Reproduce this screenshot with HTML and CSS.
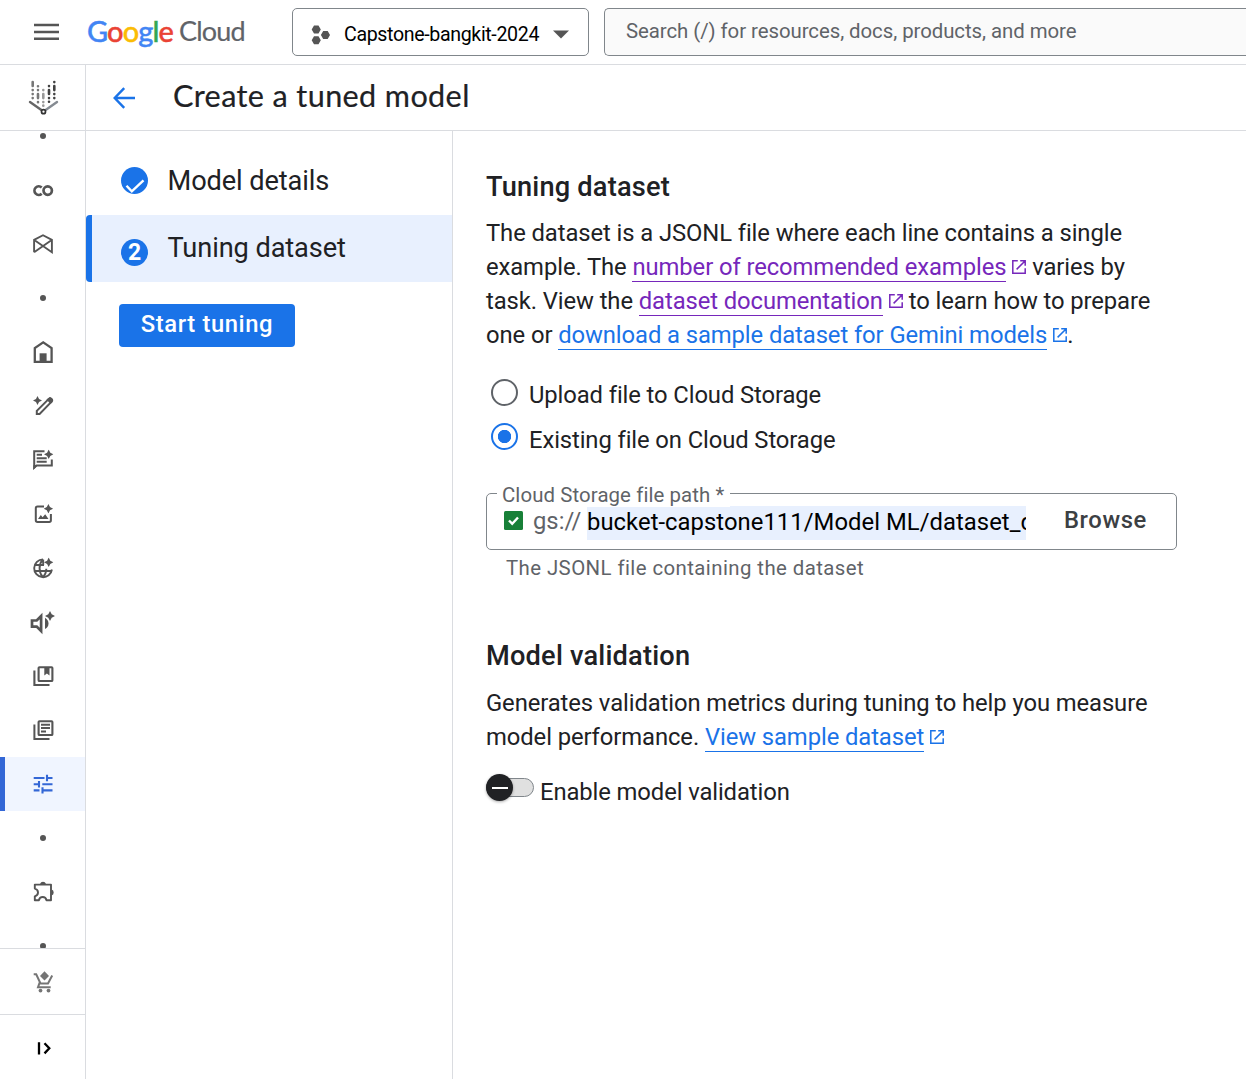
FILE: index.html
```html
<!DOCTYPE html>
<html lang="en">
<head>
<meta charset="utf-8">
<title>Create a tuned model</title>
<link rel="stylesheet" href="styles.css">
</head>
<body>
<svg class="defs" width="0" height="0" aria-hidden="true">
  <symbol id="spark" viewBox="-5 -5 10 10"><path d="M0-5 1.700-1.700 5 0 1.700 1.700 0 5-1.700 1.700-5 0-1.700-1.700z"/></symbol>
  <symbol id="ext" viewBox="0 0 14 14"><path d="M5.8.8H.8v12.4h12.4V8.2M8.2.8h5v5M13 1 4.6 9.4" fill="none" stroke="currentColor" stroke-width="1.5"/></symbol>
</svg>
<header class="topbar">
  <svg class="menu" width="26" height="18" viewBox="0 0 26 18"><path d="M0 2h25M0 9h25M0 15.700h25" stroke="#555" stroke-width="2.600"/></svg>
  <div class="brand"><span class="google"><i class="b">G</i><i class="r">o</i><i class="y">o</i><i class="b">g</i><i class="g">l</i><i class="r">e</i></span><span class="cloud">Cloud</span></div>
  <button class="project">
    <svg width="20" height="20" viewBox="0 0 20 20" fill="#555"><path d="M3 .5h4.500l2.300 4-2.300 4H3l-2.300-4zM3 11.300h4.500l2.300 4-2.300 4H3l-2.300-4zM12.200 5.900h4.500l2.300 4-2.300 4h-4.500l-2.300-4z"/></svg>
    <span>Capstone-bangkit-2024</span>
    <svg class="caret" width="16" height="9" viewBox="0 0 16 9"><path d="M0 .5h16L8 8.500z" fill="#555"/></svg>
  </button>
  <div class="search"><span>Search (/) for resources, docs, products, and more</span></div>
</header>
<div class="app">
  <nav class="rail">
    <div class="product">
      <svg width="34" height="38" viewBox="26 79 34 38" fill="none" stroke-linecap="round">
        <g stroke-width="2.600">
          <path stroke="#777" d="M32.700 82v4m0 4v.1m0 3.900v.1m0 3.900v.1M38 86.200v.1m0 3.700v.1m0 4v4m0 4v.1"/>
          <path stroke="#999" d="M43.300 90v.1m0 4v4m0 3.900v.1m0 3.500v.1"/>
          <path stroke="#424242" d="M49 86v.1m0 3.900v4m0 4v.1m0 3.600v.1M54.300 82v.1m0 4v4m0 3.900v.1m0 3.900v.1"/>
        </g>
        <path d="M30 102l13.500 9.500" stroke="#666" stroke-width="2.400"/><path d="M43.500 111.500 57 102" stroke="#858b92" stroke-width="2.400"/>
        <circle cx="43.500" cy="111.700" r="2" fill="#fff" stroke="#333" stroke-width="1.700"/>
      </svg>
    </div>
    <div class="rail-list">
      <div class="item"><i class="dot"></i></div>
      <div class="item"><svg viewBox="-17 -17 34 34"><path d="M-1.300-2.500A4.300 4.300 0 1 0-1.300 3.800" stroke-width="2.700"/><circle cx="4.700" cy=".6" r="4.200" stroke-width="2.700"/></svg></div>
      <div class="item"><svg viewBox="-17 -17 34 34"><path d="M-8.900 8.200V-4.200L0-8.800l8.900 4.600V8.200L-8.700-4M-8.900 8.200 8.700-4" stroke-width="1.900"/></svg></div>
      <div class="item"><i class="dot"></i></div>
      <div class="item"><svg viewBox="-17 -17 34 34"><path d="M-8.200 9.800V-4L.2-9.700 8.600-4V9.800z" stroke-width="2.300"/><path class="f" d="M-3.400 1.300h7v9h-7z"/></svg></div>
      <div class="item"><svg viewBox="-17 -17 34 34"><use class="f" href="#spark" x="-10" y="-10" width="9" height="9"/><path d="M-6.200 8V4.900L5.800-7.100Q7.200-8.300 8.500-7t.1 2.600L-3.400 8z" stroke-width="2"/><path class="f" d="M3.500-6.500 7-9 10-6.500 9-3 7-2.500z"/></svg></div>
      <div class="item"><svg viewBox="-17 -17 34 34"><path d="M1.500-8.800H-8.800V7.700L-6.500 5.500H8.800V-.5M-6.300-5.200h5.300M-6.300-1.700h10M-6.300 1.800h10" stroke-width="2"/><path class="f" d="M-9.700 9.700v-4.500h4.500z"/><use class="f" href="#spark" x="1" y="-10.400" width="9.400" height="9.400"/></svg></div>
      <div class="item"><svg viewBox="-17 -17 34 34"><path d="M1-7.500H-5.500Q-7.200-7.500-7.200-5.800V6.200Q-7.200 7.900-5.500 7.900H6.200Q7.900 7.900 7.900 6.200V0" stroke-width="2"/><path class="f" d="M-5 5-2.200 1-.4 3.300 2.200.3 5.500 5z"/><use class="f" href="#spark" x=".7" y="-10" width="9.400" height="9.400"/></svg></div>
      <div class="item"><svg viewBox="-17 -17 34 34"><path d="M0-8.600A8.900 8.900 0 1 0 8.900 1.500M-7.900-3H1M-8.900 3H8.700M-.2-8.600C-4.500-3.500-4.500 4-.2 9.200M-.2 9.200C2.600 6.500 3.300 3.500 3.300.8M.2-8.600V-3" stroke-width="1.900"/><use class="f" href="#spark" x="1" y="-10.400" width="9.400" height="9.400"/></svg></div>
      <div class="item"><svg viewBox="-17 -17 34 34"><path d="M-11-1.500H-6.300L-1.900-6V9L-6.300 4.600H-11z" stroke-width="2.700"/><path class="f" d="M2-4.200Q5.500-2 5.500 1.500T2 7z"/><use class="f" href="#spark" x="2" y="-11" width="10" height="10"/></svg></div>
      <div class="item"><svg viewBox="-17 -17 34 34"><rect x="-4.400" y="-8.800" width="13.800" height="13.800" rx=".8" stroke-width="2.100"/><path d="M-8.600-5.500V9H6.500" stroke-width="2.100"/><path class="f" d="M1.300-8.500h5.200v8L3.900-2.400 1.300-.5z"/></svg></div>
      <div class="item"><svg viewBox="-17 -17 34 34"><rect x="-4.400" y="-8.800" width="13.800" height="13.800" rx=".8" stroke-width="2.100"/><path d="M-8.600-5.500V9H6.500M-2-5.300H7M-2-2H7M-2 1.400H3" stroke-width="2"/></svg></div>
      <div class="item active"><svg viewBox="-17 -17 34 34"><path d="M-9.300-6H1.500M4-9.200V-2.800M4-6H9.500M-9.300.3H-4M-4-2.900V3.400M-.7.3H9.500M-9.300 6.400H-3.500M-.5 3.200V9.500M-.5 6.400H9.500" stroke-width="2.100"/></svg></div>
      <div class="item"><i class="dot"></i></div>
      <div class="item"><svg viewBox="-17 -17 34 34"><path d="M-8.200-7.400H8V8.200H3.500Q2.800 5-.3 5T-4.100 8.200H-8.200V4.300Q-5 3.500-5 .5T-8.200-3.400z" stroke-width="1.900" stroke-linejoin="round"/><path class="f" d="M-3-8Q-2.200-10.300 0-10.300T3-8zM8.500-2.500Q10.700-1.800 10.700.5T8.500 3.500z"/></svg></div>
      <div class="item"><i class="dot"></i></div>
    </div>
    <div class="rail-cart"><svg viewBox="-17 -17 34 34"><path d="M-9.300-7.700H-6.800L-2.500 1.500H5L9.200-6.500M-3-.5-5 5.300H7.700" stroke-width="2"/><path class="f" d="M1.500-10.700 6-6 1.500-1.500-3-6z"/><circle class="f" cx="-2.500" cy="8.600" r="1.900"/><circle class="f" cx="5.500" cy="8.600" r="1.900"/></svg></div>
    <div class="rail-toggle"><svg viewBox="-17 -17 34 34"><path d="M-4-5.800V6.400M1.500-4.800 6.300.3 1.500 5.400" stroke-width="2.300"/></svg></div>
  </nav>
  <div class="page">
    <div class="titlebar">
      <svg width="22" height="22" viewBox="0 0 22 22"><path d="M22 11H2M11.200 1.200 1.700 11l9.500 9.800" fill="none" stroke="#1a73e8" stroke-width="2.400"/></svg>
      <h1>Create a tuned model</h1>
    </div>
    <div class="columns">
      <aside class="steps">
        <div class="step done"><svg width="27" height="27" viewBox="0 0 27 27"><circle cx="13.500" cy="13.500" r="13.500" fill="#1a73e8"/><path d="M5.500 18.700l5.300 5.600L22.500 13.300" fill="none" stroke="#fff" stroke-width="2.400"/></svg><span>Model details</span></div>
        <div class="step current"><b>2</b><span>Tuning dataset</span></div>
        <button class="start"><span>Start tuning</span></button>
      </aside>
      <main class="content">
        <h2>Tuning dataset</h2>
        <p>The dataset is a JSONL file where each line contains a single<br>example. The <a class="visited">number of recommended examples</a><svg class="ext visited"><use href="#ext"/></svg> varies by<br>task. View the <a class="visited">dataset documentation</a><svg class="ext visited"><use href="#ext"/></svg> to learn how to prepare<br>one or <a>download a sample dataset for Gemini models</a><svg class="ext"><use href="#ext"/></svg>.</p>
        <div class="radios">
          <label><i class="radio"></i><span>Upload file to Cloud Storage</span></label>
          <label><i class="radio on"></i><span>Existing file on Cloud Storage</span></label>
        </div>
        <div class="field">
          <span class="field-label">Cloud Storage file path *</span>
          <svg width="19" height="19" viewBox="0 0 19 19"><rect width="19" height="19" rx="1.500" fill="#188038"/><path d="M5 9.500l3.200 3.200L14 6.500" fill="none" stroke="#fff" stroke-width="2.400"/></svg>
          <span class="prefix">gs://</span>
          <span class="path">bucket-capstone111/Model ML/dataset_d</span>
          <span class="browse">Browse</span>
        </div>
        <div class="hint">The JSONL file containing the dataset</div>
        <h2 class="second">Model validation</h2>
        <p>Generates validation metrics during tuning to help you measure<br>model performance. <a>View sample dataset</a><svg class="ext"><use href="#ext"/></svg></p>
        <div class="switch"><div class="track"><i class="thumb"></i></div><span>Enable model validation</span></div>
      </main>
    </div>
  </div>
</div>
</body>
</html>
```
FILE: styles.css
```css
* { box-sizing: border-box; }
body { margin: 0; width: 1246px; height: 1079px; overflow: hidden; background: #fff; color: #202124; font: 23.8px/34px Roboto, sans-serif; }
h1, h2, p { margin: 0; }
button { font: inherit; }
svg { display: block; flex: none; }
.defs { position: absolute; }

.topbar { display: flex; height: 65px; border-bottom: 1px solid #dadce0; }
.menu { margin: 23px 0 0 34px; }
.brand { display: flex; width: 205px; margin: 13px 0 0 27px; font: 29px/36px Lato, sans-serif; white-space: nowrap; }
.google { width: 92px; font-weight: 500; letter-spacing: -.9px; -webkit-text-stroke: .4px; }
.google i { font-style: normal; }
.b { color: #4285f4; } .r { color: #ea4335; } .y { color: #fbbc04; } .g { color: #34a853; }
.cloud { color: #5f6368; font-size: 27px; letter-spacing: -.8px; -webkit-text-stroke: .2px; }
.project { display: flex; align-items: center; width: 297px; height: 48px; margin-top: 8px; padding: 5px 18px 0; border: 1px solid #80868b; border-radius: 5px; background: #fff; color: #000; font-size: 19.6px; letter-spacing: -.36px; }
.project span { width: 209px; margin-left: 13px; text-align: left; white-space: nowrap; }
.search { flex: 1; height: 48px; margin: 8px 0 0 15px; padding-left: 21px; border: 1px solid #80868b; border-right: 0; border-radius: 5px 0 0 5px; background: #fafafa; color: #5f6368; font-size: 20.4px; letter-spacing: -.06px; line-height: 44px; white-space: nowrap; }

.app { display: flex; height: 1014px; }
.rail { display: flex; flex-direction: column; width: 86px; border-right: 1px solid #dadce0; color: #555; }
.rail svg[viewBox^="-17"] { width: 34px; height: 34px; fill: none; stroke: currentColor; }
.rail .f { fill: currentColor; stroke: none; }
.product { display: flex; height: 66px; padding: 14px 0 0 26px; border-bottom: 1px solid #dadce0; }
.rail-list { height: 817px; overflow: hidden; }
.item { display: flex; align-items: center; justify-content: center; height: 54px; padding-left: 1px; }
.item:first-child { height: 32px; padding-bottom: 22px; }
.dot { width: 6px; height: 6px; border-radius: 50%; background: #555; }
.active { padding-left: 0; background: #f0f5ff; border-left: 5px solid #3367d6; padding-right: 4px; color: #3367d6; }
.rail-cart { display: flex; align-items: center; justify-content: center; height: 67px; padding-left: 1px; border: 1px solid #dadce0; border-width: 1px 0; color: #757575; }
.rail-toggle { display: flex; flex: 1; align-items: center; justify-content: center; padding: 2px 0 0 1px; color: #000; }

.page { display: flex; flex: 1; flex-direction: column; }
.titlebar { display: flex; align-items: center; height: 66px; padding-left: 27px; border-bottom: 1px solid #dadce0; }
h1 { margin-left: 38px; padding-bottom: 3px; font: 400 30.6px/40px Lato, sans-serif; letter-spacing: .38px; white-space: nowrap; -webkit-text-stroke: .2px; }
.columns { display: flex; flex: 1; }
.steps { width: 367px; padding-top: 17px; border-right: 1px solid #dadce0; }
.step { display: flex; height: 67px; font-size: 27.2px; letter-spacing: -.1px; white-space: nowrap; }
.step.done { padding: 19px 0 0 35px; }
.step.done span { margin: -3px 0 0 19.5px; }
.step.current { padding: 16px 0 0 29px; border-left: 6px solid #1a73e8; border-radius: 4px 0 0 4px; background: #e8f0fe; }
.step b { width: 27px; height: 27px; margin-top: 8px; border-radius: 50%; background: #1a73e8; color: #fff; font: 700 23px/28px Roboto, sans-serif; text-align: center; }
.step.current span { margin-left: 19.5px; }
.start { display: block; width: 176px; height: 43px; margin: 22px 0 0 33px; padding: 0 0 3px; border: 0; border-radius: 4px; background: #1a73e8; color: #fff; font-weight: 500; letter-spacing: .6px; line-height: 40px; }

.content { flex: 1; padding: 39px 0 0 33px; white-space: nowrap; }
h2 { height: 46px; font-size: 27.2px; font-weight: 500; letter-spacing: .2px; line-height: 34px; }
p { letter-spacing: -.085px; }
a { border-bottom: 1px solid; color: #1a73e8; }
.ext { display: inline-block; width: 14px; height: 14px; margin-left: 6px; color: #1a73e8; vertical-align: 1px; }
.visited { color: #7627bb; }
.radios { margin-top: 23px; letter-spacing: -.1px; }
.radios label { display: flex; height: 45px; padding-left: 5px; }
.radio { width: 27px; height: 27px; margin: 4px 11px 0 0; border: 2px solid #5f6368; border-radius: 50%; }
.radio + span { padding-top: 3px; }
.radio.on { margin-top: 3px; border-color: #1a73e8; background: radial-gradient(circle, #1a73e8 6.3px, #fff 7px); }
.field { position: relative; display: flex; width: 691px; height: 57px; margin-top: 28px; padding: 12px 0 0 17px; border: 1px solid #80868b; border-radius: 5px; }
.field svg { margin-top: 5px; }
.field-label { position: absolute; top: -11px; left: 10px; padding: 0 6px 0 5px; background: #fff; color: #5f6368; font-size: 20.4px; letter-spacing: .1px; line-height: 24px; }
.prefix { width: 54px; margin-left: 10px; color: #5f6368; line-height: 31px; }
.path { width: 439px; height: 34px; overflow: hidden; background: #e8f0fe; color: #000; letter-spacing: .05px; line-height: 33px; }
.browse { margin-left: 38px; color: #3c4043; font-weight: 500; letter-spacing: .6px; line-height: 28px; }
.hint { height: 36px; padding-left: 20px; color: #5f6368; font-size: 20.4px; letter-spacing: .42px; line-height: 36px; }
.second { height: 47px; margin-top: 53px; }
.switch { display: flex; margin-top: 21px; letter-spacing: -.1px; }
.track { position: relative; width: 48px; height: 19px; margin: 3px 6px 0 0; border: 1px solid #80868b; border-radius: 10px; background: #e0e0e0; }
.thumb { position: absolute; left: -1px; top: -5px; width: 27px; height: 27px; border-radius: 50%; background: linear-gradient(#fff, #fff) center / 16px 2px no-repeat #202124; box-shadow: 0 1px 3px #0005; }
```
